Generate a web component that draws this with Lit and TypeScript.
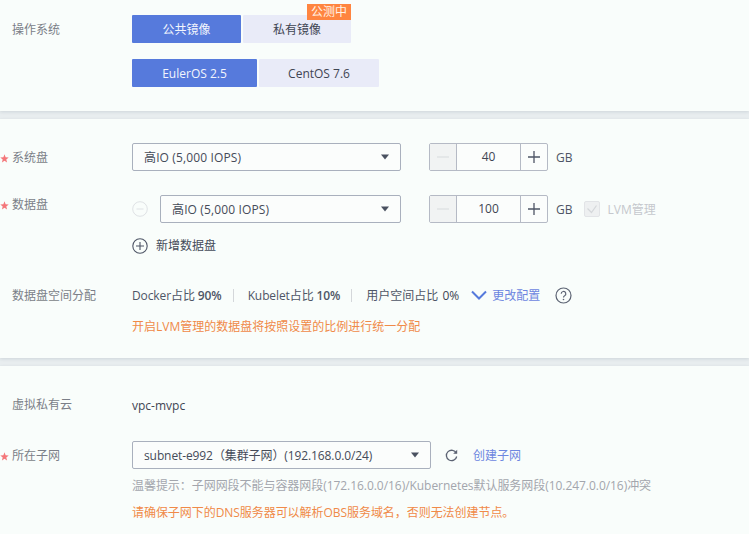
import { LitElement, html, css, svg } from 'lit';
import { customElement } from 'lit/decorators.js';

const caret = html`<svg class="caret" width="8" height="6" viewBox="0 0 8 6"><path d="M0 .5h8L4 5.5z" fill="#4a5160"/></svg>`;

function select(text: string, cls: string) {
  return html`<div class="select ${cls}"><span>${text}</span>${caret}</div>`;
}

function stepper(value: string) {
  return html`<div class="stepper">
    <div class="step off"><svg width="14" height="14" viewBox="0 0 14 14"><path d="M1 7h12" stroke="#dcdfe2" stroke-width="1.2"/></svg></div>
    <div class="num">${value}</div>
    <div class="step"><svg width="14" height="14" viewBox="0 0 14 14"><path d="M1 7h12M7 1v12" stroke="#4e5566" stroke-width="1.3"/></svg></div>
  </div>`;
}

const star = svg`<path d="M4.500 .3l1.100 2.900 3.100.2-2.400 2 .8 3L4.500 6.700 1.900 8.400l.8-3-2.400-2 3.100-.2z" fill="#f4777a"/>`;

@customElement('app-root')
export class AppRoot extends LitElement {
  static styles = css`
    :host {
      display: block;
      width: 749px;
      height: 534px;
      overflow: hidden;
      background: #e8edef;
      font-family: 'Open Sans', 'Noto Sans CJK SC', sans-serif;
      font-size: 12px;
      color: #4e5566;
    }
    .section {
      background: #f9fdfb;
      box-shadow: 0 1px 3px rgba(120, 130, 145, 0.22);
    }
    .sec-os { height: 111px; box-sizing: border-box; padding-top: 15px; margin-bottom: 8px; }
    .sec-disk { height: 239px; box-sizing: border-box; padding-top: 24px; margin-bottom: 8px; }
    .sec-net { height: 168px; box-sizing: border-box; padding-top: 31px; }
    .row {
      display: grid;
      grid-template-columns: 132px 1fr;
      align-items: center;
    }
    .label {
      position: relative;
      padding: 2px 0 0 12px;
      color: #7b7f88;
      line-height: 16px;
    }
    .label svg { position: absolute; left: 0; top: 6px; }
    .controls { display: flex; align-items: center; }
    .buttons { display: flex; gap: 2px; height: 28px; }
    .btn {
      display: flex;
      align-items: center;
      justify-content: center;
      background: #e9ebf8;
      color: #3f4553;
      border-radius: 1px;
      position: relative;
    }
    .btn.on { background: #567adc; color: #f2f5fd; }
    .w109 { width: 109px; }
    .w108 { width: 108px; }
    .w125 { width: 125px; }
    .w120 { width: 120px; }
    .badge {
      position: absolute;
      top: -11px;
      right: 0;
      width: 44px;
      height: 16px;
      background: #ff8540;
      color: #fff3e6;
      line-height: 16px;
      text-align: center;
    }
    .os2 { margin-top: 16px; }
    .select {
      box-sizing: border-box;
      height: 28px;
      border: 1px solid #a9b0bd;
      border-radius: 2px;
      background: #fbfdfc;
      display: flex;
      align-items: center;
      justify-content: space-between;
      padding: 0 11px;
      color: #454b59;
    }
    .s-sys, .s-data { letter-spacing: 0.13px; }
    .s-sys { width: 269px; }
    .s-data { width: 241px; }
    .s-net { width: 299px; letter-spacing: -0.1px; }
    .caret { flex: none; }
    .stepper {
      box-sizing: border-box;
      width: 119px;
      height: 28px;
      margin-left: 28px;
      border: 1px solid #b5bac5;
      border-radius: 2px;
      display: flex;
      background: #fbfdfc;
    }
    .step {
      width: 26px;
      display: flex;
      align-items: center;
      justify-content: center;
    }
    .step.off { background: #f1f3f3; }
    .num {
      flex: 1;
      border-left: 1px solid #b5bac5;
      border-right: 1px solid #b5bac5;
      text-align: center;
      line-height: 26px;
      color: #3f4553;
    }
    .gb { margin-left: 8px; color: #4e5566; }
    .minus { width: 16px; height: 16px; margin-right: 12px; display: block; }
    .lvm { display: flex; align-items: center; margin-left: 12px; color: #c5c8cd; gap: 7px; }
    .check {
      width: 16px;
      height: 16px;
      background: #eef0f1;
      border: 1px solid #e2e4e7;
      box-sizing: border-box;
      border-radius: 2px;
      display: flex;
      align-items: center;
      justify-content: center;
    }
    .add { display: flex; align-items: center; gap: 8px; color: #454b59; margin-top: 13px; height: 20px; }
    .ratio { margin-top: 29px; }
    .ratio .controls { height: 20px; }
    .ratio b { font-weight: 600; color: #4e5566; margin-left: 3px; }
    .sep { width: 1px; height: 13px; background: #d4d7da; margin: 0 14px 0 11px; }
    .ratio .last b { font-weight: 400; color: #3f4553; margin-left: 4px; }
    .narrow { letter-spacing: -0.1px; }
    .chev { margin-left: 12px; margin-right: 5px; }
    .link { color: #6d86e0; }
    .help { margin-left: 15px; }
    .warn { color: #f08a48; }
    .under { margin-left: 132px; line-height: 16px; }
    .hint1 { margin-top: 14px; }
    .vpc { color: #3f4553; }
    .subnet { margin-top: 27px; }
    .refresh { margin-left: 14px; margin-right: 15px; }
    .tip { color: #a3a6ad; margin-top: 9px; white-space: nowrap; letter-spacing: -0.05px; }
    .hint2 { margin-top: 11px; white-space: nowrap; letter-spacing: -0.05px; }
    .up { margin-top: -10px; }
    .vpc-label { margin-top: -4px; }
  `;

  private req(text: string, cls = '') {
    return html`<div class="label ${cls}"><svg width="9" height="9" viewBox="0 0 9 9">${star}</svg>${text}</div>`;
  }

  render() {
    return html`
      <div class="section sec-os">
        <div class="row">
          <div class="label">操作系统</div>
          <div class="buttons">
            <div class="btn on w109">公共镜像</div>
            <div class="btn w108">私有镜像<span class="badge">公测中</span></div>
          </div>
        </div>
        <div class="row os2">
          <div></div>
          <div class="buttons">
            <div class="btn on w125">EulerOS 2.5</div>
            <div class="btn w120">CentOS 7.6</div>
          </div>
        </div>
      </div>

      <div class="section sec-disk">
        <div class="row">
          ${this.req('系统盘')}
          <div class="controls">${select('高IO (5,000 IOPS)', 's-sys')}${stepper('40')}<span class="gb">GB</span></div>
        </div>
        <div class="row" style="margin-top:24px">
          ${this.req('数据盘', 'up')}
          <div class="controls">
            <svg class="minus" viewBox="0 0 16 16"><circle cx="8" cy="8" r="7.300" fill="none" stroke="#dfe2e5"/><path d="M4.500 8h7" stroke="#dfe2e5"/></svg>
            ${select('高IO (5,000 IOPS)', 's-data')}${stepper('100')}<span class="gb">GB</span>
            <div class="lvm">
              <span class="check"><svg width="12" height="10" viewBox="0 0 12 10"><path d="M1.500 4.500l4 4 5-7" fill="none" stroke="#d4d7da" stroke-width="1.200"/></svg></span>
              LVM管理
            </div>
          </div>
        </div>
        <div class="under add">
          <svg width="16" height="16" viewBox="0 0 16 16"><circle cx="8" cy="8" r="7.200" fill="none" stroke="#4e5566" stroke-width="1.100"/><path d="M4 8h8M8 4v8" stroke="#4e5566" stroke-width="1.100"/></svg>
          新增数据盘
        </div>
        <div class="row ratio">
          <div class="label">数据盘空间分配</div>
          <div class="controls">
            <span class="narrow">Docker占比<b>90%</b></span><span class="sep"></span>
            <span class="narrow">Kubelet占比<b>10%</b></span><span class="sep"></span>
            <span class="last">用户空间占比<b>0%</b></span>
            <svg class="chev" width="16" height="10" viewBox="0 0 16 10"><path d="M1 1.500l7 7 7-7" fill="none" stroke="#567adc" stroke-width="2"/></svg>
            <span class="link">更改配置</span>
            <svg class="help" width="17" height="17" viewBox="0 0 17 17"><circle cx="8.500" cy="8.500" r="7.500" fill="none" stroke="#5c6373" stroke-width="1.200"/><path d="M6.200 6.800a2.300 2.300 0 1 1 3.400 2c-.8.4-1.100.8-1.100 1.700" fill="none" stroke="#5c6373" stroke-width="1.200"/><circle cx="8.500" cy="12.500" r=".8" fill="#5c6373"/></svg>
          </div>
        </div>
        <div class="under warn hint1">开启LVM管理的数据盘将按照设置的比例进行统一分配</div>
      </div>

      <div class="section sec-net">
        <div class="row">
          <div class="label vpc-label">虚拟私有云</div>
          <div class="vpc">vpc-mvpc</div>
        </div>
        <div class="row subnet">
          ${this.req('所在子网')}
          <div class="controls">
            ${select('subnet-e992（集群子网）(192.168.0.0/24)', 's-net')}
            <svg class="refresh" width="13" height="13" viewBox="0 0 13 13"><path d="M11.300 4.200A5.200 5.200 0 1 0 11.700 7.500" fill="none" stroke="#5c6373" stroke-width="1.300"/><path d="M12.200 .8v4H8.200z" fill="#5c6373"/></svg>
            <span class="link">创建子网</span>
          </div>
        </div>
        <div class="under tip">温馨提示：子网网段不能与容器网段(172.16.0.0/16)/Kubernetes默认服务网段(10.247.0.0/16)冲突</div>
        <div class="under warn hint2">请确保子网下的DNS服务器可以解析OBS服务域名，否则无法创建节点。</div>
      </div>
    `;
  }
}
